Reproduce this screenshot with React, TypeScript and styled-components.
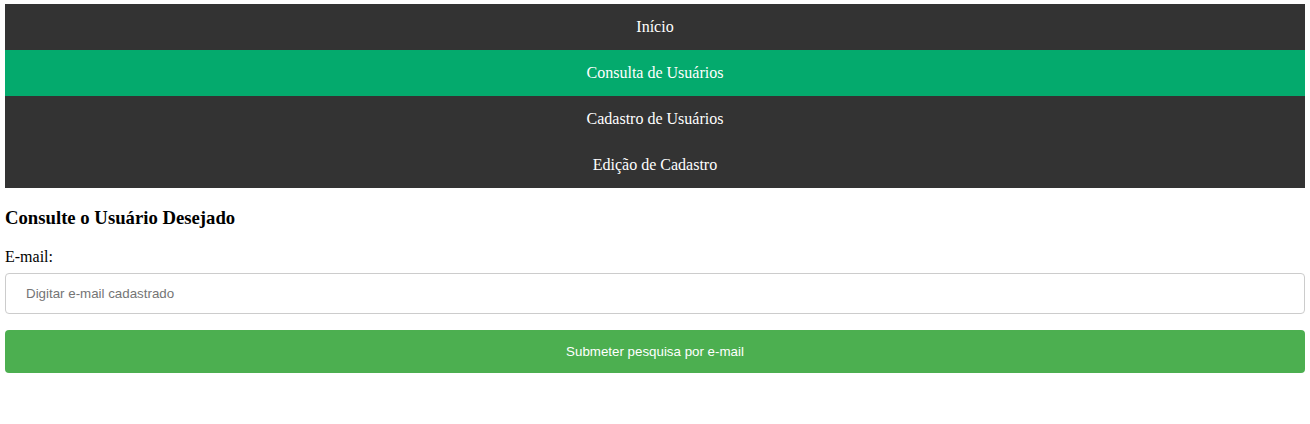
import React from "react";
import styled, { createGlobalStyle } from "styled-components";

const GlobalStyle = createGlobalStyle`
  html, body { margin: 0; padding: 0; background: #fff; }
  body { font-family: "Liberation Serif", "Times New Roman", serif; }
  * { box-sizing: border-box; }
`;

const Page = styled.div`
  padding: 4px 5px;
`;

const Nav = styled.ul`
  list-style: none;
  margin: 0;
  padding: 0;
  background: #333;
  display: flex;
  flex-direction: column;
`;

const NavItem = styled.li<{ $active?: boolean }>`
  height: 46px;
  display: flex;
  align-items: center;
  justify-content: center;
  color: #fff;
  font-size: 16px;
  background: ${(p) => (p.$active ? "#04AA6D" : "#333")};
`;

const Title = styled.h3`
  margin: 19px 0 19px;
  font-size: 18.72px;
  line-height: 22px;
  font-weight: bold;
  color: #000;
`;

const Form = styled.form`
  display: flex;
  flex-direction: column;
`;

const Label = styled.label`
  font-size: 16px;
  line-height: 18px;
  color: #000;
`;

const Input = styled.input`
  width: 100%;
  height: 41px;
  margin: 7px 0 8px;
  padding: 0 20px;
  border: 1px solid #ccc;
  border-radius: 4px;
  font-family: "Liberation Sans", Arial, sans-serif;
  font-size: 13.33px;
  outline: none;
  &::placeholder { color: #757575; }
`;

const Submit = styled.button`
  width: 100%;
  height: 43px;
  margin: 8px 0;
  border: none;
  border-radius: 4px;
  background: #4caf50;
  color: #fff;
  font-family: "Liberation Sans", Arial, sans-serif;
  font-size: 13.33px;
  cursor: pointer;
`;

export default function App() {
  const items = ["Início", "Consulta de Usuários", "Cadastro de Usuários", "Edição de Cadastro"];
  return (
    <>
      <GlobalStyle />
      <Page>
        <Nav>
          {items.map((t, i) => (
            <NavItem key={t} $active={i === 1}>{t}</NavItem>
          ))}
        </Nav>
        <Title>Consulte o Usuário Desejado</Title>
        <Form onSubmit={(e) => e.preventDefault()}>
          <Label htmlFor="email">E-mail:</Label>
          <Input id="email" type="text" placeholder="Digitar e-mail cadastrado" />
          <Submit type="submit">Submeter pesquisa por e-mail</Submit>
        </Form>
      </Page>
    </>
  );
}
